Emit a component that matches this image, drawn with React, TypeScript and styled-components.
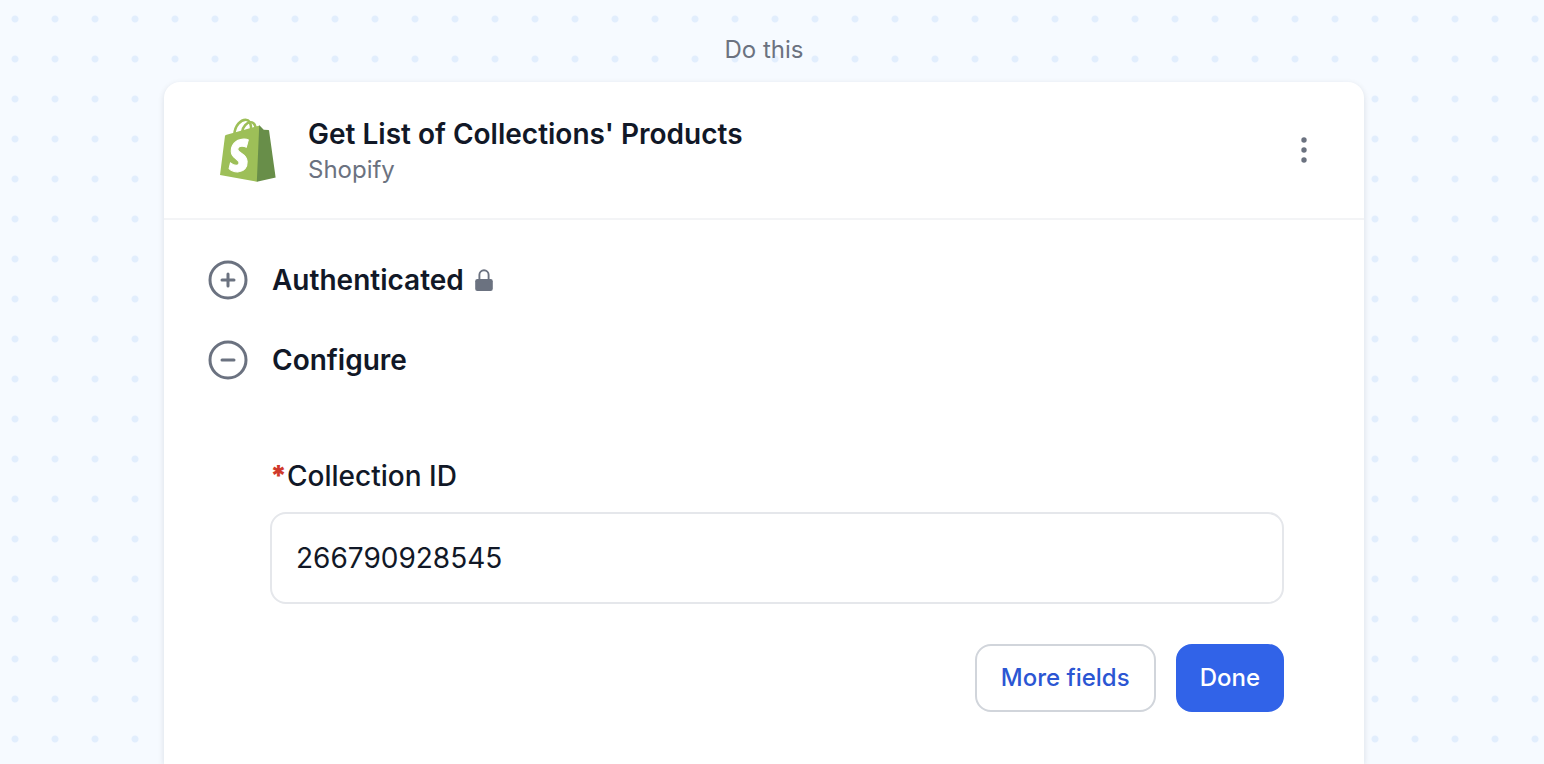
import React, { useState } from "react";
import styled, { createGlobalStyle } from "styled-components";

const GlobalStyle = createGlobalStyle`
  * { box-sizing: border-box; }
  body {
    margin: 0;
    font-family: Inter, "Liberation Sans", sans-serif;
    color: #111827;
    -webkit-font-smoothing: antialiased;
  }
`;

const Canvas = styled.main`
  min-height: 100vh;
  padding: 32px 180px 0 164px;
  display: flex;
  flex-direction: column;
  background-color: #f6faff;
  background-image: radial-gradient(circle at 15px 19px, #e2eefd 3px, transparent 4px);
  background-size: 40px 40px;
`;

const StepHint = styled.p`
  margin: 0 0 14px;
  font-size: 24px;
  line-height: 36px;
  text-align: center;
  color: #6b7280;
`;

const Card = styled.section`
  flex: 1;
  background: #ffffff;
  border-radius: 16px 16px 0 0;
  box-shadow: 0 2px 6px rgba(17, 24, 39, 0.12);
`;

const CardHeader = styled.header`
  display: flex;
  align-items: center;
  gap: 32px;
  padding: 32px 48px 32px 56px;
  border-bottom: 2px solid #f3f4f6;
`;

const HeaderText = styled.div`
  flex: 1;
`;

const Title = styled.h1`
  margin: 0;
  font-size: 28px;
  line-height: 40px;
  font-weight: 600;
`;

const AppName = styled.p`
  margin: 0;
  font-size: 24px;
  line-height: 32px;
  color: #6b7280;
`;

const IconButton = styled.button`
  display: flex;
  padding: 0;
  border: 0;
  background: none;
  color: #6b7280;
  cursor: pointer;
`;

const CardBody = styled.div`
  display: flex;
  flex-direction: column;
  gap: 40px;
  padding: 40px 80px 40px 44px;
`;

const SectionToggle = styled.button`
  display: flex;
  align-items: center;
  align-self: flex-start;
  gap: 24px;
  padding: 0;
  border: 0;
  background: none;
  font-family: inherit;
  color: #6b7280;
  cursor: pointer;
`;

const SectionTitle = styled.span`
  display: flex;
  align-items: center;
  gap: 11px;
  font-size: 28px;
  line-height: 40px;
  font-weight: 600;
  color: #111827;
`;

const Form = styled.form`
  display: flex;
  flex-direction: column;
  padding: 36px 0 0 62px;
`;

const Label = styled.label`
  margin-bottom: 16px;
  font-size: 28px;
  line-height: 40px;
  font-weight: 500;
`;

const Required = styled.span`
  font-weight: 900;
  color: #d0392b;
`;

const TextInput = styled.input`
  width: 100%;
  height: 92px;
  padding: 0 24px;
  border: 2px solid #e5e7eb;
  border-radius: 16px;
  background: #ffffff;
  font-family: inherit;
  font-size: 28px;
  color: #111827;
  outline: none;
`;

const Actions = styled.div`
  display: flex;
  justify-content: flex-end;
  gap: 20px;
  margin-top: 40px;
`;

const Button = styled.button<{ $primary?: boolean }>`
  height: 68px;
  padding: 0 ${(p) => (p.$primary ? 22 : 24)}px;
  border: 2px solid ${(p) => (p.$primary ? "#3163e8" : "#d1d5db")};
  border-radius: 16px;
  background: ${(p) => (p.$primary ? "#3163e8" : "#ffffff")};
  color: ${(p) => (p.$primary ? "#ffffff" : "#2b56d3")};
  font-family: inherit;
  font-size: 24px;
  line-height: 32px;
  font-weight: 500;
  cursor: pointer;
`;

const ShopifyLogo = () => (
  <svg width="56" height="64" viewBox="0 0 109.5 124.5" role="img" aria-label="Shopify logo">
    <g fill="none" stroke="#9dbf58" strokeWidth="5">
      <path d="M28 32C29 14 41 3 50 3c7 0 11 8 11 20" />
      <path d="M43 28C44 16 53 8 60 8c5 0 9 5 10 13" />
    </g>
    <path
      fill="#9dbf58"
      d="M78 14.2 13 32.6c-2.8.9-3.2 1.4-3.5 4.2L0 111.2l73 13.1 12-60z"
    />
    <path
      fill="#688e49"
      d="M94.8 22.9l-9.3-.2-7.6-7.7c-.4-.4-.7-.6-1.2-.7l-4.7 110 37-8.1S96 24.5 95.9 23.9c-.1-.6-.6-1-1.1-1z"
    />
    <path
      fill="#ffffff"
      stroke="#ffffff"
      strokeWidth="2"
      transform="translate(-2.5 -2)"
      d="M57.9 44.5l-3.8 14.2s-4.3-1.9-9.3-1.6c-7.5.5-7.5 5.2-7.5 6.4.4 6.4 17.3 7.8 18.3 22.9.7 11.9-6.3 20-16.4 20.6-12.2.8-18.9-6.4-18.9-6.4l2.6-11s6.7 5.1 12.1 4.7c3.5-.2 4.8-3.1 4.7-5.1-.5-8.4-14.3-7.9-15.2-21.7-.7-11.6 6.9-23.4 23.7-24.5 6.5-.4 9.7 1.5 9.7 1.5z"
    />
  </svg>
);

const MoreIcon = () => (
  <svg width="24" height="32" viewBox="0 0 24 32" fill="currentColor" aria-hidden="true">
    <circle cx="12" cy="6" r="2.7" />
    <circle cx="12" cy="16" r="2.7" />
    <circle cx="12" cy="26" r="2.7" />
  </svg>
);

const ToggleIcon = ({ open }: { open: boolean }) => (
  <svg
    width="40"
    height="40"
    viewBox="0 0 40 40"
    fill="none"
    stroke="currentColor"
    strokeWidth="3"
    strokeLinecap="round"
    aria-hidden="true"
  >
    <circle cx="20" cy="20" r="18" />
    <path d={open ? "M14 20h12" : "M14 20h12M20 14v12"} />
  </svg>
);

const LockIcon = () => (
  <svg width="18" height="24" viewBox="0 0 18 24" aria-label="Locked" role="img">
    <path d="M4.4 12V6.8a4.6 4.6 0 0 1 9.2 0V12" fill="none" stroke="#6b7280" strokeWidth="1.9" />
    <rect x="0.2" y="11" width="17.6" height="12" rx="2.2" fill="#6b7280" />
  </svg>
);

export default function App() {
  const [authOpen, setAuthOpen] = useState(false);
  const [configureOpen, setConfigureOpen] = useState(true);
  const [collectionId, setCollectionId] = useState("266790928545");

  return (
    <>
      <GlobalStyle />
      <Canvas>
        <StepHint>Do this</StepHint>
        <Card>
          <CardHeader>
            <ShopifyLogo />
            <HeaderText>
              <Title>Get List of Collections' Products</Title>
              <AppName>Shopify</AppName>
            </HeaderText>
            <IconButton type="button" aria-label="More options">
              <MoreIcon />
            </IconButton>
          </CardHeader>
          <CardBody>
            <SectionToggle type="button" aria-expanded={authOpen} onClick={() => setAuthOpen(!authOpen)}>
              <ToggleIcon open={authOpen} />
              <SectionTitle>
                Authenticated
                <LockIcon />
              </SectionTitle>
            </SectionToggle>
            <SectionToggle
              type="button"
              aria-expanded={configureOpen}
              onClick={() => setConfigureOpen(!configureOpen)}
            >
              <ToggleIcon open={configureOpen} />
              <SectionTitle>Configure</SectionTitle>
            </SectionToggle>
            {configureOpen && (
              <Form onSubmit={(e) => e.preventDefault()}>
                <Label htmlFor="collection-id">
                  <Required>*</Required>Collection ID
                </Label>
                <TextInput
                  id="collection-id"
                  type="text"
                  value={collectionId}
                  onChange={(e) => setCollectionId(e.target.value)}
                />
                <Actions>
                  <Button type="button">More fields</Button>
                  <Button type="submit" $primary>
                    Done
                  </Button>
                </Actions>
              </Form>
            )}
          </CardBody>
        </Card>
      </Canvas>
    </>
  );
}
